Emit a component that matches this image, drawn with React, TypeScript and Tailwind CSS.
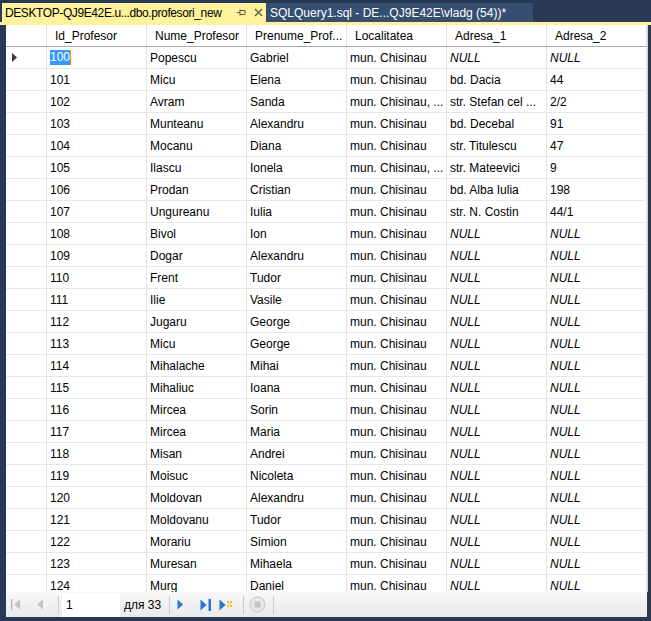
const rows: string[][] = [
  ["100", "Popescu", "Gabriel", "mun. Chisinau", "NULL", "NULL"],
  ["101", "Micu", "Elena", "mun. Chisinau", "bd. Dacia", "44"],
  ["102", "Avram", "Sanda", "mun. Chisinau, ...", "str. Stefan cel ...", "2/2"],
  ["103", "Munteanu", "Alexandru", "mun. Chisinau", "bd. Decebal", "91"],
  ["104", "Mocanu", "Diana", "mun. Chisinau", "str. Titulescu", "47"],
  ["105", "Ilascu", "Ionela", "mun. Chisinau, ...", "str. Mateevici", "9"],
  ["106", "Prodan", "Cristian", "mun. Chisinau", "bd. Alba Iulia", "198"],
  ["107", "Ungureanu", "Iulia", "mun. Chisinau", "str. N. Costin", "44/1"],
  ["108", "Bivol", "Ion", "mun. Chisinau", "NULL", "NULL"],
  ["109", "Dogar", "Alexandru", "mun. Chisinau", "NULL", "NULL"],
  ["110", "Frent", "Tudor", "mun. Chisinau", "NULL", "NULL"],
  ["111", "Ilie", "Vasile", "mun. Chisinau", "NULL", "NULL"],
  ["112", "Jugaru", "George", "mun. Chisinau", "NULL", "NULL"],
  ["113", "Micu", "George", "mun. Chisinau", "NULL", "NULL"],
  ["114", "Mihalache", "Mihai", "mun. Chisinau", "NULL", "NULL"],
  ["115", "Mihaliuc", "Ioana", "mun. Chisinau", "NULL", "NULL"],
  ["116", "Mircea", "Sorin", "mun. Chisinau", "NULL", "NULL"],
  ["117", "Mircea", "Maria", "mun. Chisinau", "NULL", "NULL"],
  ["118", "Misan", "Andrei", "mun. Chisinau", "NULL", "NULL"],
  ["119", "Moisuc", "Nicoleta", "mun. Chisinau", "NULL", "NULL"],
  ["120", "Moldovan", "Alexandru", "mun. Chisinau", "NULL", "NULL"],
  ["121", "Moldovanu", "Tudor", "mun. Chisinau", "NULL", "NULL"],
  ["122", "Morariu", "Simion", "mun. Chisinau", "NULL", "NULL"],
  ["123", "Muresan", "Mihaela", "mun. Chisinau", "NULL", "NULL"],
  ["124", "Murg", "Daniel", "mun. Chisinau", "NULL", "NULL"],
];

const headers = ["Id_Profesor", "Nume_Profesor", "Prenume_Prof...", "Localitatea", "Adresa_1", "Adresa_2"];

function Sep() {
  return <div className="w-px h-[18px] bg-[#c9c9c9] mx-[4px]" />;
}

export default function App() {
  return (
    <div className="w-[651px] h-[621px] bg-[#293955] flex flex-col overflow-hidden font-['Liberation_Sans',Arial,sans-serif] text-[12px] text-black">
      {/* tabs */}
      <div className="flex h-[22px] pt-[3px] pl-[2px] shrink-0">
        <div className="w-[264px] bg-[#fff29d] flex items-center pl-[3px] whitespace-nowrap">
          <span className="w-[229px] tracking-[-0.4px] overflow-hidden">DESKTOP-QJ9E42E.u...dbo.profesori_new</span>
          <svg width="9" height="9" viewBox="0 0 9 9" className="ml-[3px]">
            <path d="M0 4.5H3M3 1.5V7.5M3 2.5H8M3 6.5H8M8 2.5V6.5" stroke="#5a5a3c" strokeWidth="1" fill="none" />
          </svg>
          <svg width="9" height="9" viewBox="0 0 9 9" className="ml-[8px]">
            <path d="M1 1L8 8M8 1L1 8" stroke="#5a5a3c" strokeWidth="1.3" />
          </svg>
        </div>
        <div className="w-[267px] bg-[#364e6f] text-white flex items-center pl-[4px] whitespace-nowrap">
          SQLQuery1.sql - DE...QJ9E42E\vladg (54))*
        </div>
      </div>
      <div className="h-[3px] bg-[#fff29d] shrink-0" />

      {/* grid */}
      <div className="ml-[6px] w-[642px] flex-1 overflow-hidden bg-white border-r border-[#d4d4d4]">
        <div className="flex h-[22px] border-b border-[#a9a9a9]">
          <div className="w-[41px] border-r border-[#e3e3e3] shrink-0" />
          {headers.map((h) => (
            <div key={h} className="w-[100px] shrink-0 border-r border-[#e3e3e3] flex items-center pl-[8px] whitespace-nowrap">
              {h}
            </div>
          ))}
        </div>
        {rows.map((r, i) => (
          <div key={r[0]} className="flex h-[22px] border-b border-[#e8e8e8]">
            <div className="w-[41px] shrink-0 border-r border-[#e3e3e3] flex items-center pl-[6px]">
              {i === 0 && (
                <svg width="6" height="9" viewBox="0 0 6 9">
                  <path d="M0 0L5 4.5L0 9Z" fill="#3a3a3a" />
                </svg>
              )}
            </div>
            {r.map((c, j) => (
              <div key={j} className="w-[100px] shrink-0 border-r border-[#e3e3e3] flex items-center pl-[3px] whitespace-nowrap overflow-hidden">
                {i === 0 && j === 0 ? (
                  <span className="bg-[#3399ff] text-white border-r border-[#ff8c00] leading-[15px]">{c}</span>
                ) : c === "NULL" ? (
                  <span className="italic">NULL</span>
                ) : (
                  c
                )}
              </div>
            ))}
          </div>
        ))}
      </div>

      {/* navigator */}
      <div className="ml-[6px] w-[641px] h-[25px] shrink-0 flex items-center bg-gradient-to-b from-[#f8f8f8] to-[#e9e9e9]">
        <svg width="10" height="11" viewBox="0 0 10 11" className="ml-[5px]">
          <path d="M0.5 0V11" stroke="#b0b0b0" strokeWidth="1.5" />
          <path d="M9 0.5L3 5.5L9 10.5Z" fill="#c4c4c4" />
        </svg>
        <svg width="8" height="11" viewBox="0 0 8 11" className="ml-[15px]">
          <path d="M7 0.5L1 5.5L7 10.5Z" fill="#c4c4c4" />
        </svg>
        <div className="ml-[10px]"><Sep /></div>
        <div className="w-[58px] h-[24px] bg-white flex items-center pl-[4px] -ml-[1px]">1</div>
        <span className="ml-[4px]">для 33</span>
        <div className="ml-[4px]"><Sep /></div>
        <svg width="7" height="11" viewBox="0 0 7 11" className="ml-[3px]">
          <path d="M0.5 0.5L6 5.5L0.5 10.5Z" fill="#2a74d2" />
        </svg>
        <svg width="12" height="12" viewBox="0 0 12 12" className="ml-[16px]">
          <path d="M0.5 0.5L6.5 6L0.5 11.5Z" fill="#2a74d2" />
          <rect x="8.5" y="0" width="2.5" height="12" fill="#2a74d2" />
        </svg>
        <svg width="15" height="12" viewBox="0 0 15 12" className="ml-[7px]">
          <path d="M0.5 0.5L6.5 6L0.5 11.5Z" fill="#2a74d2" />
          <rect x="8" y="2" width="2" height="2" fill="#e8c23a" />
          <rect x="11" y="2" width="2" height="2" fill="#e8c23a" />
          <rect x="9.5" y="4" width="2" height="2" fill="#f3d76a" />
          <rect x="8" y="6" width="2" height="2" fill="#e8c23a" />
          <rect x="11" y="6" width="2" height="2" fill="#e8c23a" />
        </svg>
        <div className="ml-[5px]"><Sep /></div>
        <svg width="17" height="17" viewBox="0 0 17 17" className="ml-[1px]">
          <circle cx="8.5" cy="8.5" r="7.5" fill="#e9e9e9" stroke="#c4c4c4" />
          <rect x="5.5" y="5.5" width="6" height="6" fill="#c4c4c4" />
        </svg>
        <div className="ml-[3px]"><Sep /></div>
      </div>
      <div className="h-[4px] shrink-0" />
    </div>
  );
}
